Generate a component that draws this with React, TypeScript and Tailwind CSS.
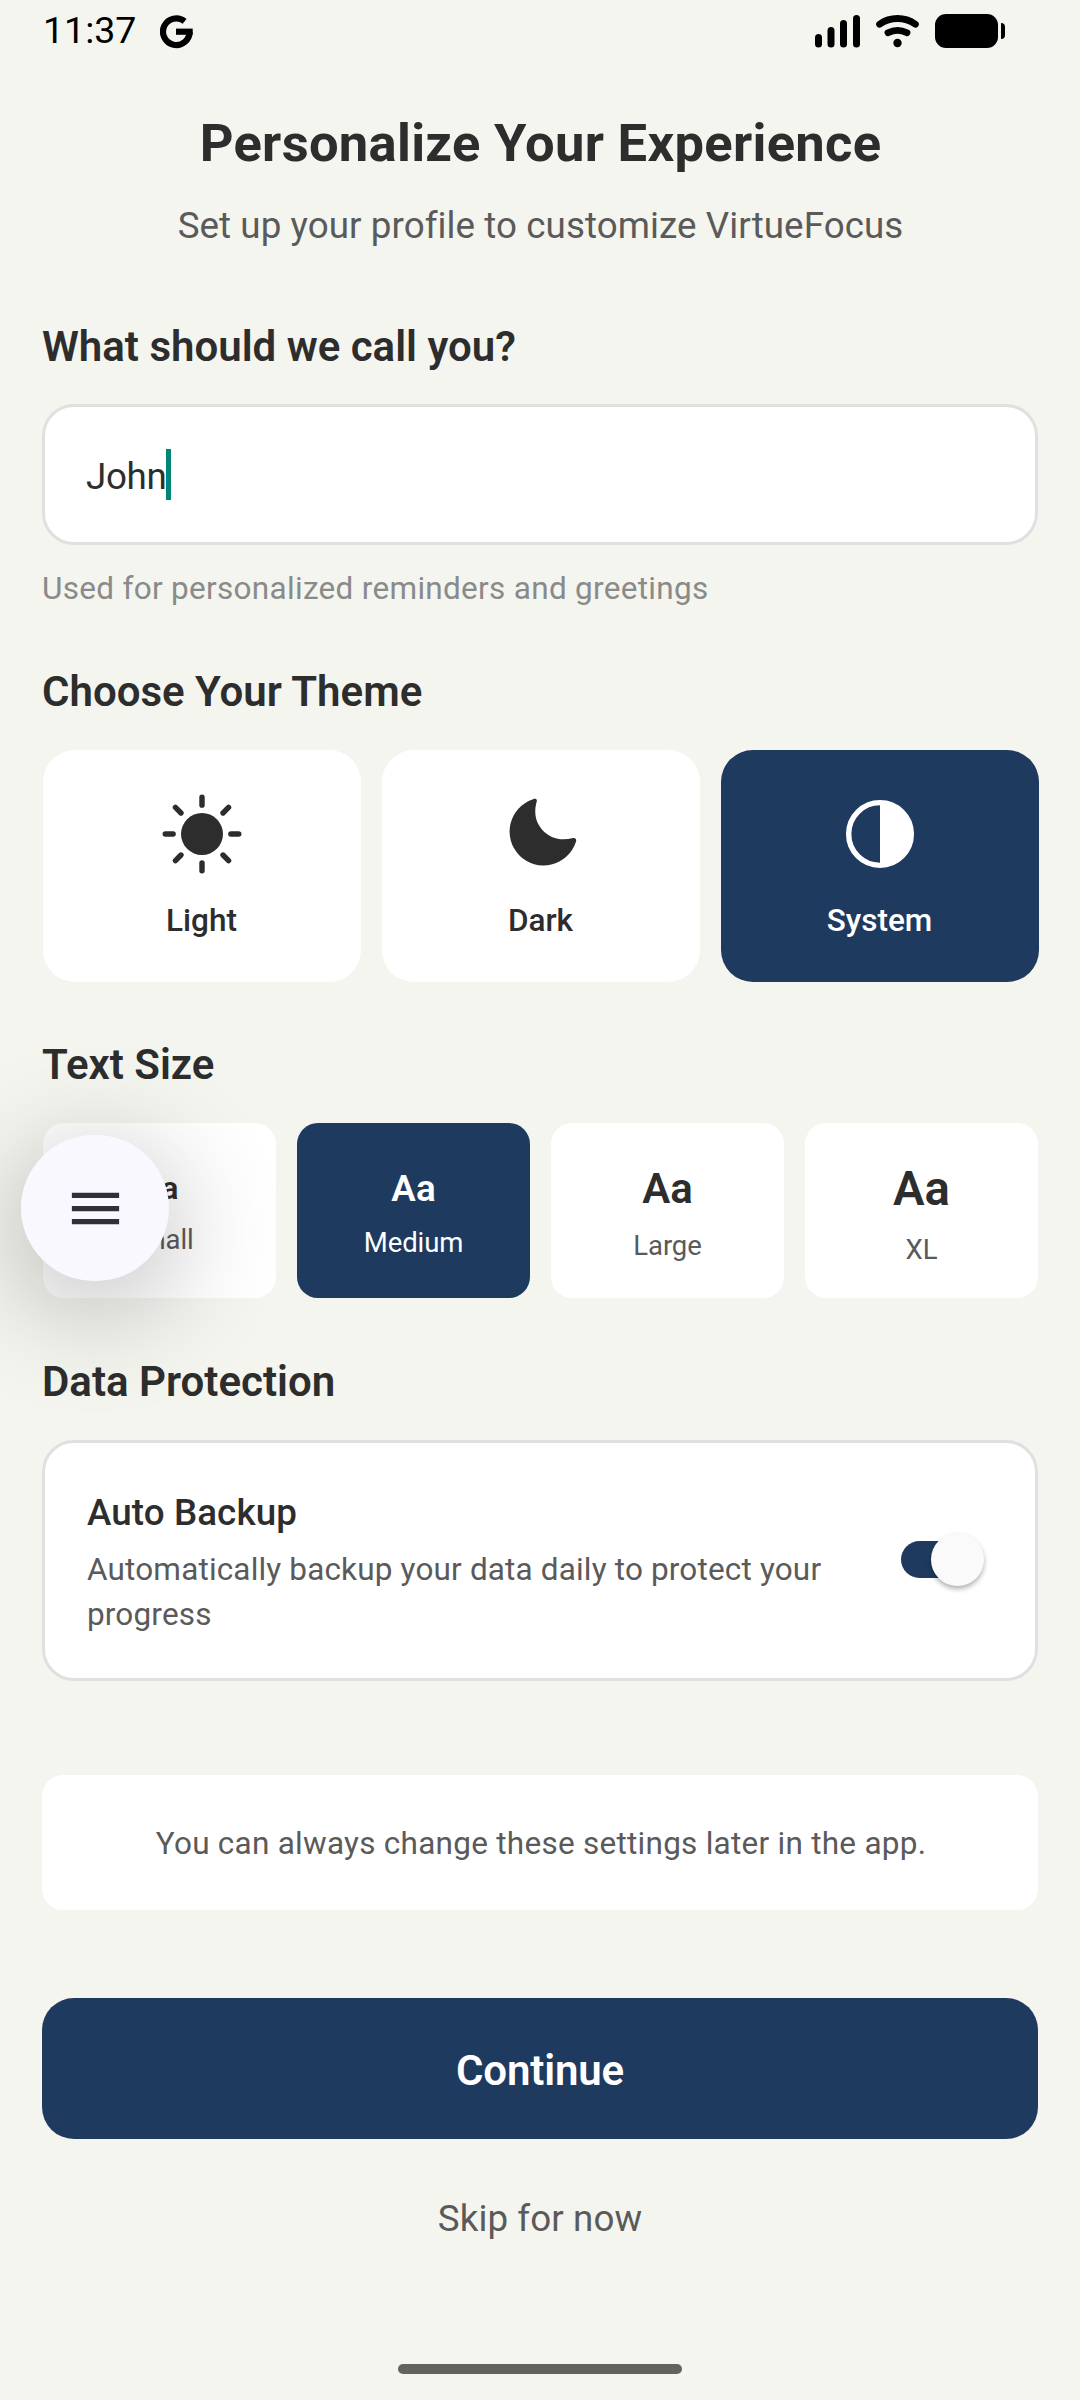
import { useState } from 'react'

function SunIcon() {
  return (
    <svg width="84" height="84" viewBox="0 0 512 512" fill="currentColor">
      <circle cx="256" cy="256" r="128" />
      <path
        d="M256 80V32M256 432v48M432 256h48M80 256H32M384 128l34-34M128 128L94 94M384 384l34 34M128 384l-34 34"
        stroke="currentColor"
        strokeWidth="33"
        strokeLinecap="round"
      />
    </svg>
  )
}

function MoonIcon() {
  return (
    <svg width="84" height="84" viewBox="0 0 512 512" fill="currentColor">
      <path d="M208 44A207 207 0 1 0 468 306C475 290 467 277 452 281C432 286 412 288 392 288C300 288 221 212 221 120C221 98 224 80 230 58C234 44 222 38 208 44Z" />
    </svg>
  )
}

function ContrastIcon() {
  return (
    <svg width="84" height="84" viewBox="0 0 512 512" fill="currentColor">
      <circle cx="256" cy="256" r="191" fill="none" stroke="currentColor" strokeWidth="33" />
      <path d="M256 64a192 192 0 0 1 0 384z" />
    </svg>
  )
}

const THEMES = [
  { id: 'light', label: 'Light', icon: SunIcon },
  { id: 'dark', label: 'Dark', icon: MoonIcon },
  { id: 'system', label: 'System', icon: ContrastIcon },
]

const SIZES = [
  { id: 'small', label: 'Small', sample: 'text-[31.5px] leading-[37px]' },
  { id: 'medium', label: 'Medium', sample: 'text-[36.75px] leading-[43px]' },
  { id: 'large', label: 'Large', sample: 'text-[42px] leading-[49px]' },
  { id: 'xl', label: 'XL', sample: 'text-[47.25px] leading-[56px]' },
]

function StatusBar() {
  return (
    <div className="h-[60px] pl-[43px] pr-[74px] flex items-center justify-between text-black">
      <div className="flex items-center gap-[24px]">
        <span className="text-[37.5px] leading-[60px]">11:37</span>
        <svg className="mt-[4px]" width="34" height="34" viewBox="0 0 34 34" fill="none" stroke="currentColor" strokeWidth="6.2">
          <path d="M24.6 6.3A13.3 13.3 0 1 0 29.6 16.7" />
          <path d="M16 16.7H32.7" />
        </svg>
      </div>
      <svg className="mt-[4px]" width="192" height="36" viewBox="0 0 192 36" fill="currentColor">
        <rect x="1" y="20" width="7" height="13.5" rx="3.5" />
        <rect x="13.5" y="13" width="7" height="20.5" rx="3.5" />
        <rect x="26" y="6" width="7" height="27.5" rx="3.5" />
        <rect x="39" y="1" width="7" height="32.5" rx="3.5" />
        <g fill="none" stroke="currentColor" strokeWidth="6.8" strokeLinecap="round">
          <path d="M65.6 10.2A31 31 0 0 1 101.4 10.2" />
          <path d="M74 18.8A20.7 20.7 0 0 1 93 18.8" />
        </g>
        <circle cx="83.5" cy="29" r="4.2" />
        <rect x="121" y="0" width="63" height="34" rx="11" />
        <path d="M187 9Q191 9 191 13V21Q191 25 187 25Z" />
      </svg>
    </div>
  )
}

export default function App() {
  const [theme, setTheme] = useState('system')
  const [size, setSize] = useState('medium')
  const [backup, setBackup] = useState(true)

  return (
    <div className="relative w-[1080px] h-[2400px] overflow-hidden bg-[#f4f5ef] font-[Roboto,sans-serif] text-[#2d2d2d] flex flex-col">
      <StatusBar />

      <main className="px-[42px] flex flex-col">
        <h1 className="mt-[52px] pl-px text-[52.5px] leading-[62px] font-bold tracking-[0.3px] text-center">
          Personalize Your Experience
        </h1>
        <p className="mt-[30px] pl-px text-[36.75px] leading-[43px] tracking-[0.07px] text-center text-[#5a5a5a]">
          Set up your profile to customize VirtueFocus
        </p>

        {/* Name */}
        <h2 className="mt-[75px] text-[42px] leading-[49px] font-semibold">What should we call you?</h2>
        <div className="mt-[33px] h-[141px] rounded-[32px] border-[3px] border-[#e0e0e0] bg-white px-[41px] flex items-center">
          <span className="pt-[4px] text-[36.75px] leading-[43px] tracking-[-0.35px]">John</span>
          <span className="w-[5px] h-[51px] bg-[#008577]" />
        </div>
        <p className="mt-[25px] text-[31.5px] leading-[37px] tracking-[0.3px] text-[#8a8a8a]">
          Used for personalized reminders and greetings
        </p>

        {/* Theme */}
        <h2 className="mt-[60px] text-[42px] leading-[49px] font-semibold">Choose Your Theme</h2>
        <div className="mt-[34px] ml-px -mr-px flex gap-[21px]">
          {THEMES.map(({ id, label, icon: Icon }) => (
            <button
              key={id}
              onClick={() => setTheme(id)}
              className={`flex-1 h-[232px] rounded-[32px] flex flex-col items-center pt-[42px] ${
                theme === id ? 'bg-[#1e3a5f] text-white' : 'bg-white'
              }`}
            >
              <Icon />
              <span className="mt-[26px] pr-px text-[31.5px] leading-[37px] font-medium">{label}</span>
            </button>
          ))}
        </div>

        {/* Text size */}
        <h2 className="mt-[58px] text-[42px] leading-[49px] font-semibold">Text Size</h2>
        <div className="mt-[34px] ml-px flex gap-[21px]">
          {SIZES.map(s => (
            <button
              key={s.id}
              onClick={() => setSize(s.id)}
              className={`flex-1 h-[175px] rounded-[21px] flex flex-col items-center justify-center ${
                size === s.id ? 'bg-[#1e3a5f] text-white' : 'bg-white'
              }`}
            >
              <span className={`font-semibold ${s.sample}`}>Aa</span>
              <span className={`mt-[16px] -mb-[6px] text-[27.5px] leading-[34px] tracking-[-0.1px] ${size === s.id ? '' : 'text-[#5a5a5a]'}`}>
                {s.label}
              </span>
            </button>
          ))}
        </div>

        {/* Backup */}
        <h2 className="mt-[59px] text-[42px] leading-[49px] font-semibold">Data Protection</h2>
        <div className="mt-[34px] h-[241px] rounded-[32px] border-[3px] border-[#e0e0e0] bg-white pl-[42px] pr-[50px] flex items-center justify-between">
          <div className="w-[760px] pt-[7px]">
            <h3 className="text-[36.75px] leading-[43px] tracking-[0.1px] font-medium">Auto Backup</h3>
            <p className="mt-[13px] text-[31.5px] leading-[45px] tracking-[0.16px] text-[#5a5a5a]">
              Automatically backup your data daily to protect your progress
            </p>
          </div>
          <button onClick={() => setBackup(!backup)} className="mb-[3px] w-[84px] h-[53px] flex items-center">
            <span className={`w-[72px] h-[37px] shrink-0 rounded-full ${backup ? 'bg-[#1e3a5f]' : 'bg-[#e0e0e0]'}`} />
            <span
              className={`w-[53px] h-[53px] shrink-0 rounded-full bg-[#fafafa] shadow-[0_3px_5px_rgba(0,0,0,0.3)] ${
                backup ? '-ml-[42px]' : '-ml-[72px]'
              }`}
            />
          </button>
        </div>

        <div className="mt-[94px] h-[135px] rounded-[21px] bg-white flex items-center justify-center">
          <p className="pt-px pl-[2px] text-[31.5px] leading-[45px] tracking-[0.26px] text-[#5a5a5a]">
            You can always change these settings later in the app.
          </p>
        </div>

        <button className="mt-[88px] h-[141px] pt-[3px] rounded-[32px] bg-[#1e3a5f] text-white text-[42px] leading-[49px] tracking-[-0.15px] font-semibold">
          Continue
        </button>
        <button className="mt-[58px] text-[36.75px] leading-[43px] tracking-[0.1px] text-[#5a5a5a]">Skip for now</button>
      </main>

      {/* Floating menu */}
      <button className="absolute left-[21px] top-[1135px] w-[148px] h-[146px] rounded-full bg-[#faf8ff] text-[#303038] flex items-center justify-center shadow-[0_22px_115px_rgba(0,0,0,0.3)]">
        <svg width="63" height="63" viewBox="0 0 24 24" fill="currentColor">
          <path d="M3 18h18v-2H3v2zm0-5h18v-2H3v2zm0-7v2h18V6H3z" />
        </svg>
      </button>

      <div className="mt-auto mb-[26px] self-center w-[284px] h-[10px] rounded-full bg-[#62635f]" />
    </div>
  )
}
